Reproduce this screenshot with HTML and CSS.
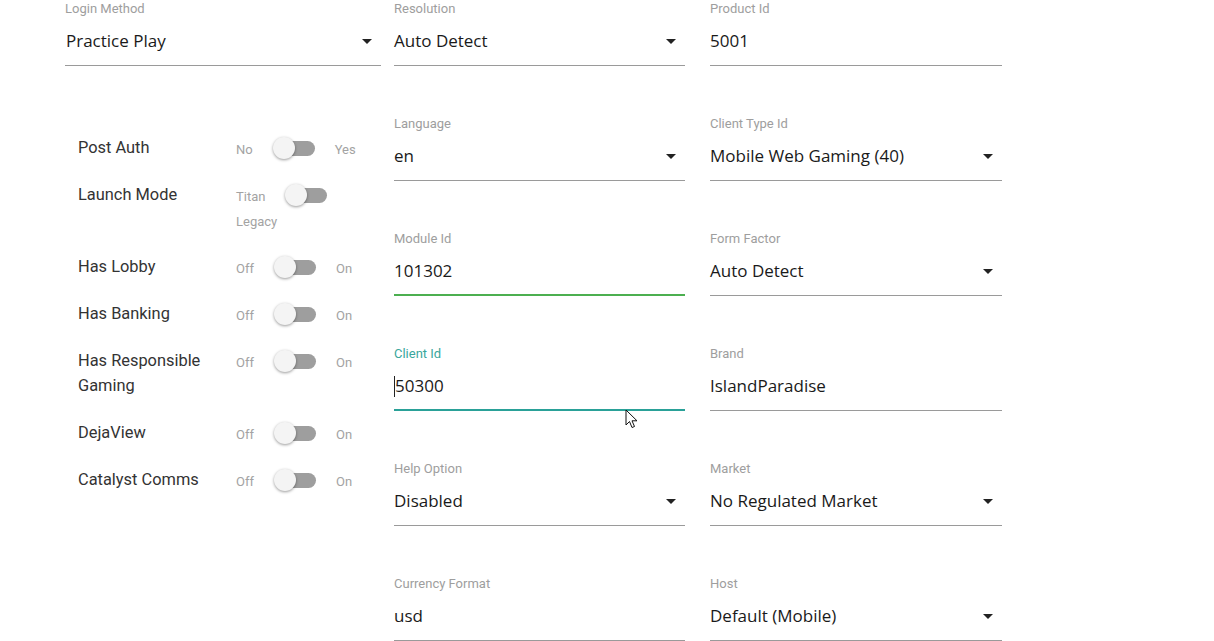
FILE: index.html
```html
<!DOCTYPE html>
<html>
<head>
<meta charset="utf-8">
<link rel="stylesheet" href="styles.css">
</head>
<body>
<div class="page">
  <div class="left">
    <div class="field">
      <div class="label">Login Method</div>
      <div class="value"><span class="text">Practice Play</span><span class="arrow"></span></div>
    </div>
    <div class="toggles">
      <div class="trow"><div class="tname">Post Auth</div><div class="tctl"><span class="opt">No</span><span class="switch"><span class="track"></span><span class="thumb"></span></span><span class="opt">Yes</span></div></div>
      <div class="trow"><div class="tname">Launch Mode</div><div class="tctl"><span class="opt">Titan</span><span class="switch"><span class="track"></span><span class="thumb"></span></span><span class="opt">Legacy</span></div></div>
      <div class="trow"><div class="tname">Has Lobby</div><div class="tctl"><span class="opt">Off</span><span class="switch"><span class="track"></span><span class="thumb"></span></span><span class="opt">On</span></div></div>
      <div class="trow"><div class="tname">Has Banking</div><div class="tctl"><span class="opt">Off</span><span class="switch"><span class="track"></span><span class="thumb"></span></span><span class="opt">On</span></div></div>
      <div class="trow"><div class="tname">Has Responsible Gaming</div><div class="tctl"><span class="opt">Off</span><span class="switch"><span class="track"></span><span class="thumb"></span></span><span class="opt">On</span></div></div>
      <div class="trow"><div class="tname">DejaView</div><div class="tctl"><span class="opt">Off</span><span class="switch"><span class="track"></span><span class="thumb"></span></span><span class="opt">On</span></div></div>
      <div class="trow"><div class="tname">Catalyst Comms</div><div class="tctl"><span class="opt">Off</span><span class="switch"><span class="track"></span><span class="thumb"></span></span><span class="opt">On</span></div></div>
    </div>
  </div>
  <div class="grid">
    <div class="field">
      <div class="label">Resolution</div>
      <div class="value"><span class="text">Auto Detect</span><span class="arrow"></span></div>
    </div>
    <div class="field">
      <div class="label">Product Id</div>
      <div class="value"><span class="text">5001</span></div>
    </div>
    <div class="field">
      <div class="label">Language</div>
      <div class="value"><span class="text">en</span><span class="arrow"></span></div>
    </div>
    <div class="field">
      <div class="label">Client Type Id</div>
      <div class="value"><span class="text">Mobile Web Gaming (40)</span><span class="arrow"></span></div>
    </div>
    <div class="field valid">
      <div class="label">Module Id</div>
      <div class="value"><span class="text">101302</span></div>
    </div>
    <div class="field">
      <div class="label">Form Factor</div>
      <div class="value"><span class="text">Auto Detect</span><span class="arrow"></span></div>
    </div>
    <div class="field focused">
      <div class="label">Client Id</div>
      <div class="value"><span class="caret"></span><span class="text">50300</span></div>
      <svg class="cursor" width="14" height="21" viewBox="0 0 14 21"><path d="M1 1 L1 16 L4.5 12.5 L7 18.5 L9.5 17.5 L7 11.8 L12 11.8 Z" fill="#fff" stroke="#111" stroke-width="1" stroke-linejoin="round"/></svg>
    </div>
    <div class="field">
      <div class="label">Brand</div>
      <div class="value"><span class="text">IslandParadise</span></div>
    </div>
    <div class="field">
      <div class="label">Help Option</div>
      <div class="value"><span class="text">Disabled</span><span class="arrow"></span></div>
    </div>
    <div class="field">
      <div class="label">Market</div>
      <div class="value"><span class="text">No Regulated Market</span><span class="arrow"></span></div>
    </div>
    <div class="field">
      <div class="label">Currency Format</div>
      <div class="value"><span class="text">usd</span></div>
    </div>
    <div class="field">
      <div class="label">Host</div>
      <div class="value"><span class="text">Default (Mobile)</span><span class="arrow"></span></div>
    </div>
  </div>
</div>
</body>
</html>
```

FILE: styles.css
```css
html, body {
  margin: 0;
  padding: 0;
  background: #fff;
  overflow: hidden;
}
body {
  font-family: Roboto, "Liberation Sans", sans-serif;
  color: #212121;
}
.page {
  display: flex;
  padding-left: 65px;
  gap: 13px;
}
.left {
  width: 316px;
  flex: none;
}
.grid {
  display: grid;
  grid-template-columns: 291px 292px;
  column-gap: 25px;
  row-gap: 49px;
  align-content: start;
}
.field {
  position: relative;
  padding-top: 1px;
  padding-bottom: 11px;
  border-bottom: 1px solid #9a9a9a;
}
.field.valid {
  border-bottom: 2px solid #4caf50;
  padding-bottom: 10px;
}
.field.focused {
  border-bottom: 2px solid #2aa198;
  padding-bottom: 10px;
}
.label {
  font-family: Roboto, sans-serif;
  font-size: 13px;
  line-height: 16px;
  color: #9e9e9e;
}
.focused .label {
  color: #3aa69c;
}
.value {
  display: flex;
  align-items: center;
  margin-top: 11px;
  height: 26px;
  font-family: "Open Sans", sans-serif;
  font-size: 17px;
  line-height: 26px;
  color: #1a1a1a;
}
.text {
  flex: 1;
}
.left .value .text {
  padding-left: 1px;
}
.caret {
  width: 1px;
  height: 21px;
  background: #222;
}
.arrow {
  width: 0;
  height: 0;
  border-left: 5px solid transparent;
  border-right: 5px solid transparent;
  border-top: 5px solid #222;
  margin-right: 9px;
}
.cursor {
  position: absolute;
  left: 231px;
  top: 64px;
}
.toggles {
  margin-top: 58px;
}
.trow {
  display: flex;
  align-items: flex-start;
  padding: 11px 0;
}
.tname {
  width: 158px;
  padding-left: 13px;
  padding-right: 8px;
  box-sizing: border-box;
  font-size: 16.4px;
  line-height: 25px;
  color: #333;
}
.tctl {
  flex: 1;
  display: flex;
  flex-wrap: wrap;
  align-items: center;
  margin-left: 13px;
}
.opt {
  font-size: 13px;
  line-height: 25px;
  height: 25px;
  color: #a3a3a3;
  position: relative;
  top: 2px;
}
.switch {
  position: relative;
  width: 42px;
  height: 25px;
  margin: 0 20px;
}
.track {
  position: absolute;
  left: 3px;
  right: 0;
  top: 6px;
  height: 15px;
  border-radius: 8px;
  background: #9e9e9e;
}
.thumb {
  position: absolute;
  left: 0;
  top: 2px;
  width: 22px;
  height: 22px;
  border-radius: 50%;
  background: #f4f4f4;
  box-shadow: 0 1px 3px rgba(0,0,0,0.4);
}
```
